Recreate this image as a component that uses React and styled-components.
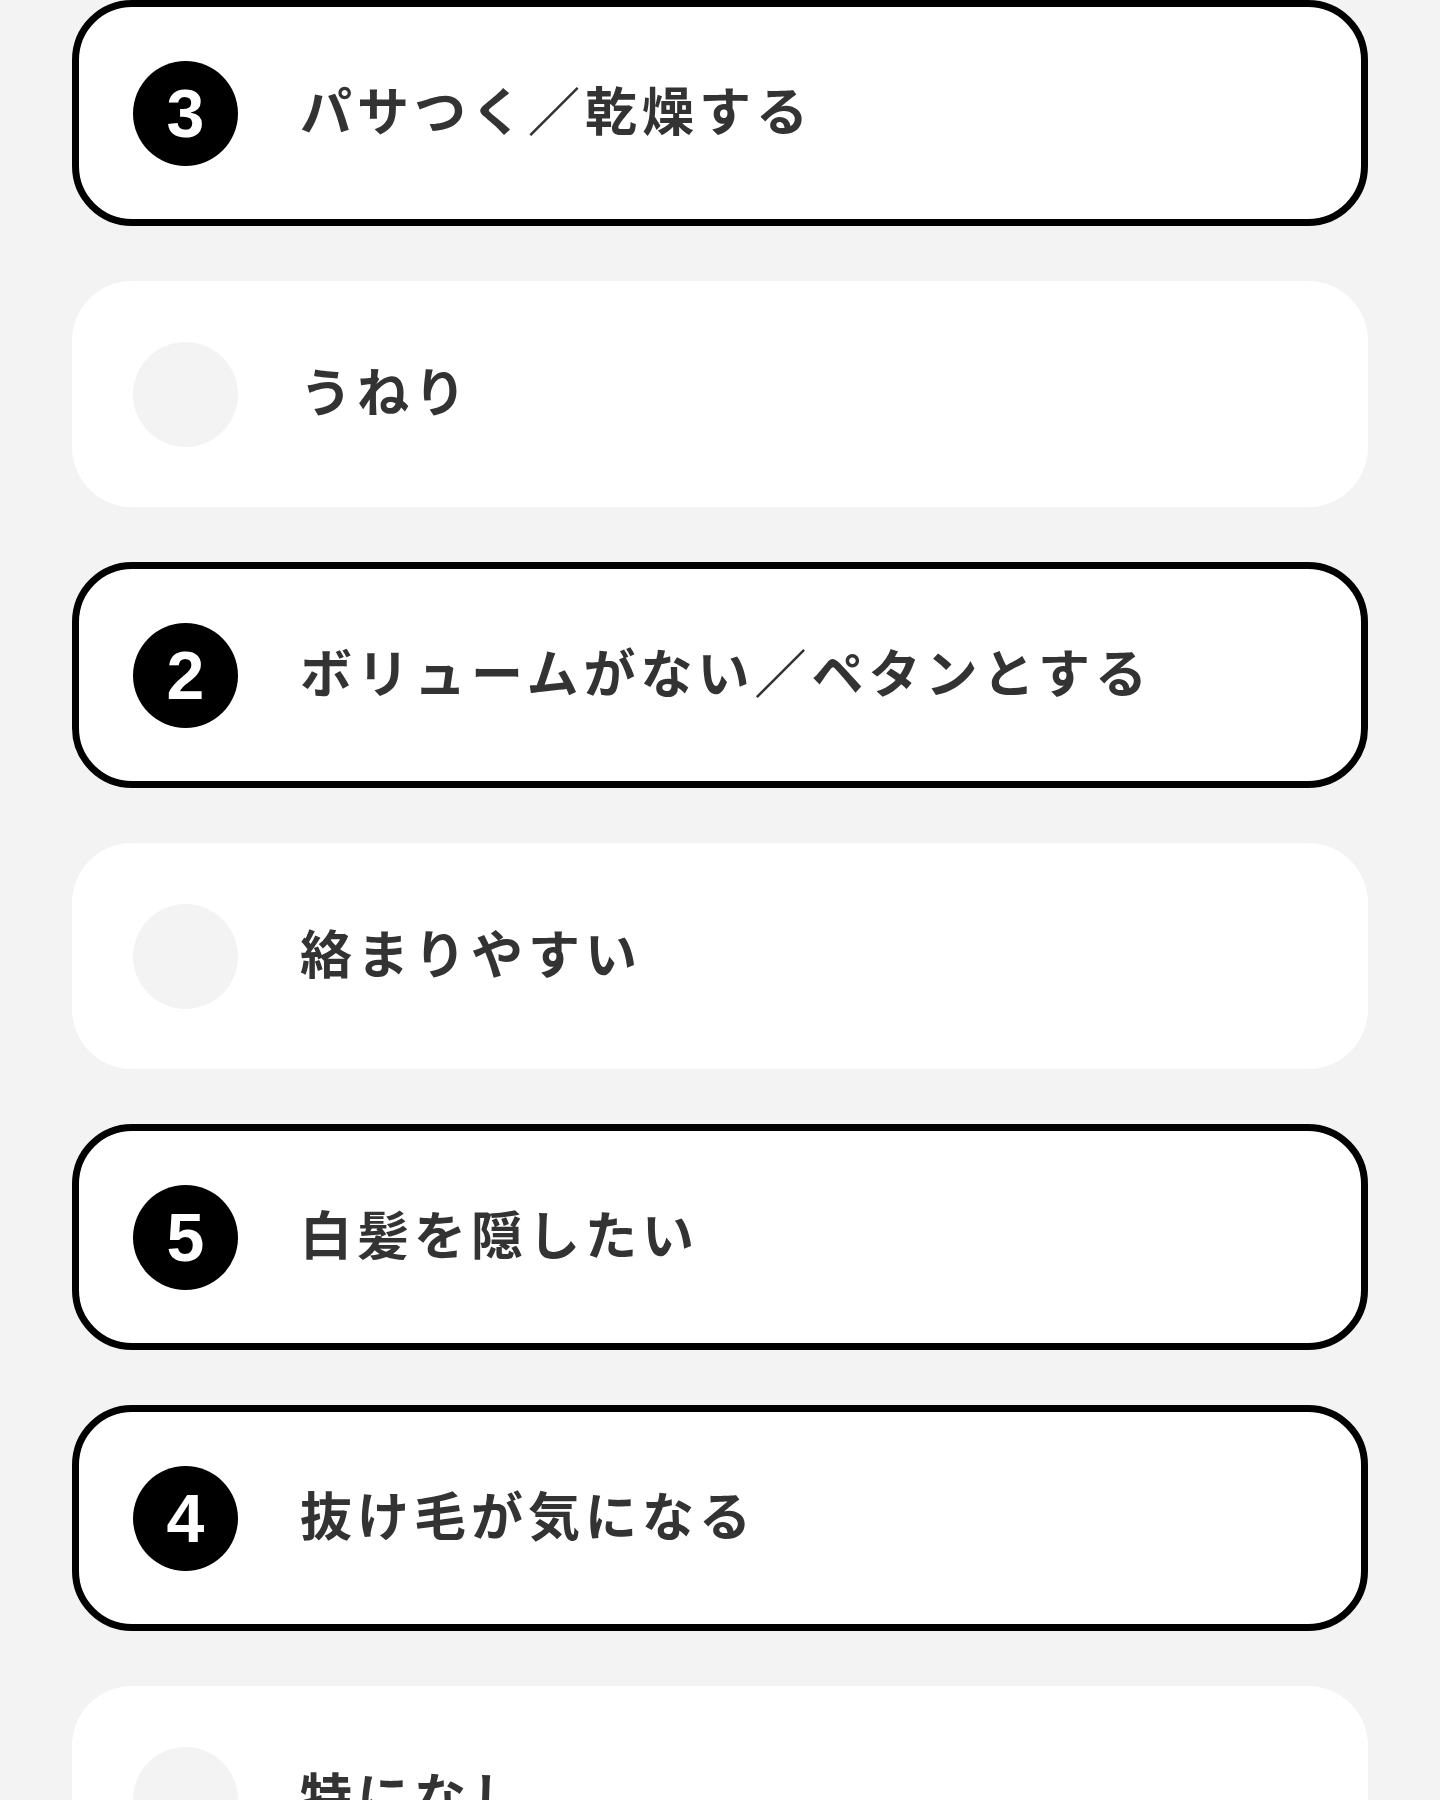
import React from 'react';
import styled, { createGlobalStyle } from 'styled-components';

const GlobalStyle = createGlobalStyle`
  html, body {
    margin: 0;
    padding: 0;
    background: #f3f3f3;
  }
  * {
    box-sizing: border-box;
  }
`;

const List = styled.ul`
  list-style: none;
  margin: 0;
  padding: 0 72px;
  display: flex;
  flex-direction: column;
  gap: 55px;
`;

const Card = styled.li`
  height: 226px;
  display: flex;
  align-items: center;
  padding-left: 54px;
  background: #fff;
  border: 7px solid ${props => (props.selected ? '#000' : 'transparent')};
  border-radius: 60px;
  cursor: pointer;
`;

const Badge = styled.span`
  flex: none;
  width: 105px;
  height: 105px;
  border-radius: 50%;
  background: ${props => (props.rank ? '#000' : '#f3f3f3')};
  color: #fff;
  display: flex;
  align-items: center;
  justify-content: center;
  font-family: "Liberation Sans", Arial, sans-serif;
  font-weight: 700;
  font-size: 68px;
  line-height: 1;
`;

const Label = styled.span`
  margin-left: 62px;
  padding-bottom: 8px;
  font-family: "Noto Sans CJK JP", "Noto Sans", sans-serif;
  font-weight: 700;
  font-size: 52px;
  line-height: 1.2;
  letter-spacing: 5px;
  color: #333;
  white-space: nowrap;
`;

const items = [
  { label: 'パサつく／乾燥する', rank: 3 },
  { label: 'うねり', rank: null },
  { label: 'ボリュームがない／ペタンとする', rank: 2 },
  { label: '絡まりやすい', rank: null },
  { label: '白髪を隠したい', rank: 5 },
  { label: '抜け毛が気になる', rank: 4 },
  { label: '特になし', rank: null },
];

const App = () => {
  return (
    <>
      <GlobalStyle />
      <List>
        {items.map((item, index) => (
          <Card key={index} selected={!!item.rank}>
            <Badge rank={item.rank}>{item.rank}</Badge>
            <Label>{item.label}</Label>
          </Card>
        ))}
      </List>
    </>
  );
};

export default App;
